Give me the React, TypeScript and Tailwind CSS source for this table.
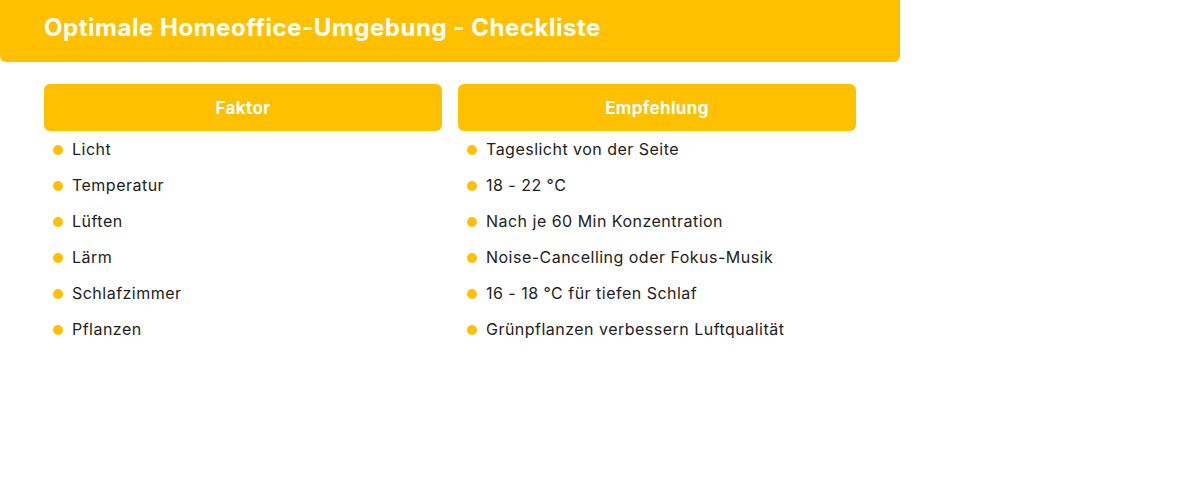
const factors = [
  { name: "Licht", tip: "Tageslicht von der Seite" },
  { name: "Temperatur", tip: "18 - 22 °C" },
  { name: "Lüften", tip: "Nach je 60 Min Konzentration" },
  { name: "Lärm", tip: "Noise-Cancelling oder Fokus-Musik" },
  { name: "Schlafzimmer", tip: "16 - 18 °C für tiefen Schlaf" },
  { name: "Pflanzen", tip: "Grünpflanzen verbessern Luftqualität" },
];

function Column({ title, items }: { title: string; items: string[] }) {
  return (
    <div className="flex flex-col">
      <div className="flex h-[47px] items-center justify-center rounded-md bg-[#ffc000] pt-[3px] text-[17px] font-bold tracking-[0.02em] text-white">
        {title}
      </div>
      <ul>
        {items.map((t) => (
          <li key={t} className="flex h-9 items-center pl-[9px] text-base tracking-[0.03em] text-[#222]">
            <span className="mr-[9px] mt-[2px] h-[10px] w-[10px] shrink-0 rounded-full bg-[#ffc000]" />
            {t}
          </li>
        ))}
      </ul>
    </div>
  );
}

export default function App() {
  return (
    <div className="min-h-[484px] bg-white font-['Inter',sans-serif]">
      <div className="w-[900px]">
        <div className="flex h-[62px] items-center rounded-b-md bg-[#ffc000] px-11 pb-[7px]">
          <h1 className="text-2xl font-bold tracking-[0.022em] text-white">Optimale Homeoffice-Umgebung - Checkliste</h1>
        </div>
        <div className="mt-[22px] grid grid-cols-2 gap-4 px-11">
          <Column title="Faktor" items={factors.map((f) => f.name)} />
          <Column title="Empfehlung" items={factors.map((f) => f.tip)} />
        </div>
      </div>
    </div>
  );
}
